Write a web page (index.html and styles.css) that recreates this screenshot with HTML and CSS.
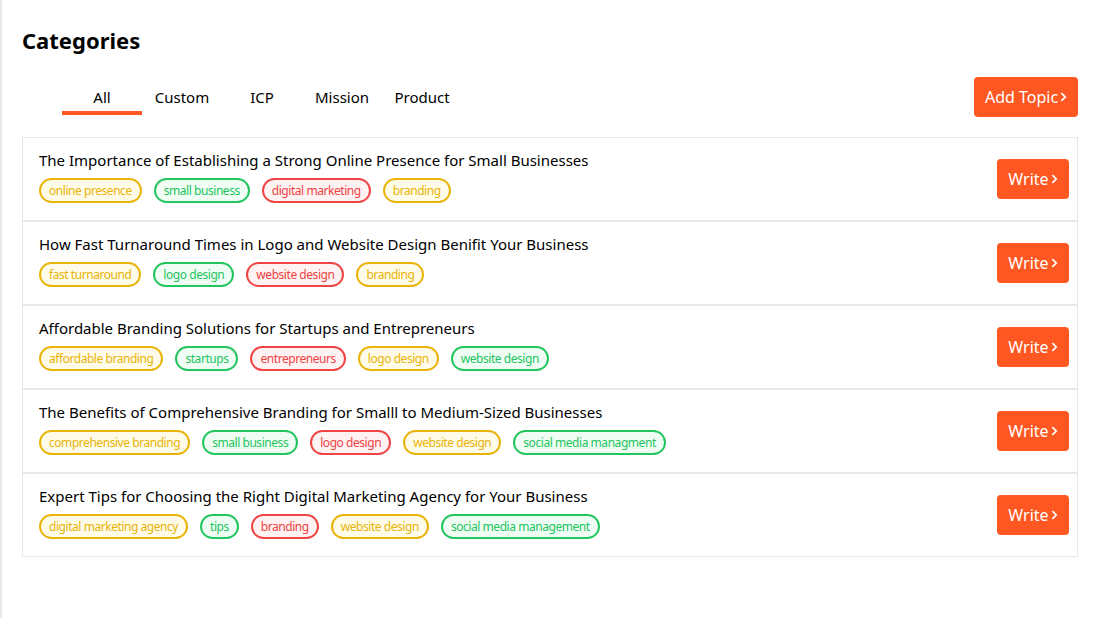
FILE: index.html
```html
<!DOCTYPE html>
<html>
<head>
<meta charset="utf-8">
<link rel="stylesheet" href="styles.css">
</head>
<body>
<div class="page">
  <h1 class="title">Categories</h1>
  <div class="toolbar">
    <div class="tabs">
      <div class="tab active">All</div>
      <div class="tab">Custom</div>
      <div class="tab">ICP</div>
      <div class="tab">Mission</div>
      <div class="tab">Product</div>
    </div>
    <button class="btn btn-add">Add Topic<svg class="chev" viewBox="0 0 8 12"><path d="M1.5 1.5 L6 6 L1.5 10.5" fill="none" stroke="currentColor" stroke-width="2"/></svg></button>
  </div>
  <div class="list">
    <div class="row">
      <div class="info">
        <div class="row-title">The Importance of Establishing a Strong Online Presence for Small Businesses</div>
        <div class="tags">
          <span class="tag yellow">online presence</span>
          <span class="tag green">small business</span>
          <span class="tag red">digital marketing</span>
          <span class="tag yellow">branding</span>
        </div>
      </div>
      <button class="btn btn-write">Write<svg class="chev" viewBox="0 0 8 12"><path d="M1.5 1.5 L6 6 L1.5 10.5" fill="none" stroke="currentColor" stroke-width="2"/></svg></button>
    </div>
    <div class="row">
      <div class="info">
        <div class="row-title">How Fast Turnaround Times in Logo and Website Design Benifit Your Business</div>
        <div class="tags">
          <span class="tag yellow">fast turnaround</span>
          <span class="tag green">logo design</span>
          <span class="tag red">website design</span>
          <span class="tag yellow">branding</span>
        </div>
      </div>
      <button class="btn btn-write">Write<svg class="chev" viewBox="0 0 8 12"><path d="M1.5 1.5 L6 6 L1.5 10.5" fill="none" stroke="currentColor" stroke-width="2"/></svg></button>
    </div>
    <div class="row">
      <div class="info">
        <div class="row-title">Affordable Branding Solutions for Startups and Entrepreneurs</div>
        <div class="tags">
          <span class="tag yellow">affordable branding</span>
          <span class="tag green">startups</span>
          <span class="tag red">entrepreneurs</span>
          <span class="tag yellow">logo design</span>
          <span class="tag green">website design</span>
        </div>
      </div>
      <button class="btn btn-write">Write<svg class="chev" viewBox="0 0 8 12"><path d="M1.5 1.5 L6 6 L1.5 10.5" fill="none" stroke="currentColor" stroke-width="2"/></svg></button>
    </div>
    <div class="row">
      <div class="info">
        <div class="row-title">The Benefits of Comprehensive Branding for Smalll to Medium-Sized Businesses</div>
        <div class="tags">
          <span class="tag yellow">comprehensive branding</span>
          <span class="tag green">small business</span>
          <span class="tag red">logo design</span>
          <span class="tag yellow">website design</span>
          <span class="tag green">social media managment</span>
        </div>
      </div>
      <button class="btn btn-write">Write<svg class="chev" viewBox="0 0 8 12"><path d="M1.5 1.5 L6 6 L1.5 10.5" fill="none" stroke="currentColor" stroke-width="2"/></svg></button>
    </div>
    <div class="row">
      <div class="info">
        <div class="row-title">Expert Tips for Choosing the Right Digital Marketing Agency for Your Business</div>
        <div class="tags">
          <span class="tag yellow">digital marketing agency</span>
          <span class="tag green">tips</span>
          <span class="tag red">branding</span>
          <span class="tag yellow">website design</span>
          <span class="tag green">social media management</span>
        </div>
      </div>
      <button class="btn btn-write">Write<svg class="chev" viewBox="0 0 8 12"><path d="M1.5 1.5 L6 6 L1.5 10.5" fill="none" stroke="currentColor" stroke-width="2"/></svg></button>
    </div>
  </div>
</div>
</body>
</html>
```

FILE: styles.css
```css
html, body {
  margin: 0;
  padding: 0;
  background: #ffffff;
}
body {
  font-family: "Noto Sans", "Open Sans", sans-serif;
  color: #000;
  border-left: 2px solid #e5e7eb;
  min-height: 618px;
  box-sizing: border-box;
}
.page {
  padding: 23px 20px 0 20px;
}
.title {
  margin: 0;
  font-size: 22px;
  font-weight: 700;
  line-height: 34px;
}
.toolbar {
  display: flex;
  justify-content: space-between;
  align-items: center;
  margin-top: 20px;
  height: 40px;
}
.tabs {
  display: flex;
  padding-left: 40px;
  height: 40px;
}
.tab {
  width: 80px;
  text-align: center;
  font-size: 15px;
  line-height: 20px;
  padding-top: 10px;
  box-sizing: border-box;
  height: 38px;
  border-bottom: 4px solid transparent;
}
.tab.active {
  border-bottom-color: #ff5722;
}
.btn {
  display: inline-flex;
  align-items: center;
  justify-content: center;
  border: none;
  border-radius: 4px;
  background: #ff5722;
  color: #fff;
  font-family: "Noto Sans", "Open Sans", sans-serif;
  font-size: 16px;
  height: 40px;
  cursor: pointer;
}
.btn-add {
  width: 104px;
}
.btn-write {
  width: 72px;
  margin-right: 8px;
}
.chev {
  width: 7px;
  height: 12px;
  margin-left: 2px;
}
.list {
  margin-top: 20px;
}
.row {
  display: flex;
  align-items: center;
  justify-content: space-between;
  border: 1px solid #e5e7eb;
  height: 84px;
  box-sizing: border-box;
  padding-left: 16px;
}
.info {
  align-self: flex-start;
  padding-top: 12px;
}
.row-title {
  font-size: 15px;
  line-height: 20px;
}
.tags {
  display: flex;
  gap: 12px;
  margin-top: 8px;
}
.tag {
  font-size: 12px;
  letter-spacing: -0.45px;
  line-height: 21px;
  padding: 0 8px;
  border: 2px solid;
  border-radius: 999px;
}
.tag.yellow {
  color: #eab308;
  border-color: #eab308;
  background: #fefce8;
}
.tag.green {
  color: #22c55e;
  border-color: #22c55e;
  background: #f0fdf4;
}
.tag.red {
  color: #ef4444;
  border-color: #ef4444;
  background: #fef2f2;
}
```
